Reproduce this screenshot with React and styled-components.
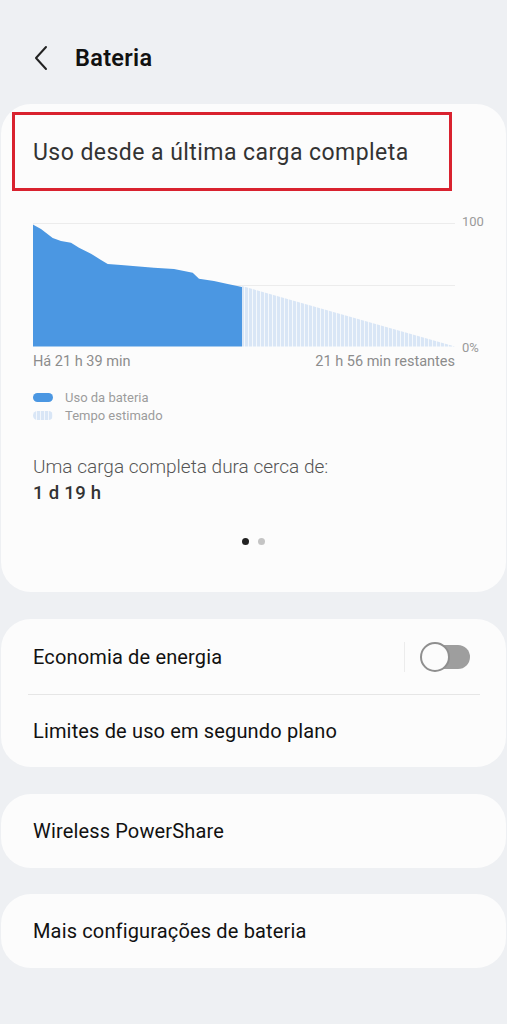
import React from "react";
import styled, { createGlobalStyle } from "styled-components";

const GlobalStyle = createGlobalStyle`
  html, body {
    margin: 0;
    padding: 0;
    background: #eef0f3;
  }
  body {
    font-family: Roboto, "Noto Sans", "Liberation Sans", sans-serif;
    -webkit-font-smoothing: antialiased;
  }
`;

const Page = styled.div`
  width: 507px;
  min-height: 1024px;
  background: #eef0f3;
  display: flex;
  flex-direction: column;
`;

const Header = styled.header`
  height: 104px;
  display: flex;
  align-items: center;
  padding-left: 33px;
  box-sizing: border-box;
  padding-top: 12px;
`;

const BackButton = styled.button`
  border: 0;
  background: none;
  padding: 0;
  width: 18px;
  height: 26px;
  margin-right: 24px;
  display: flex;
  align-items: center;
  cursor: pointer;
`;

const Title = styled.h1`
  margin: 0;
  font-size: 23.5px;
  font-weight: 600;
  color: #111;
  letter-spacing: 0.3px;
`;

const Card = styled.section`
  margin: 0 1px ${(p) => p.gap || 0}px;
  background: #fcfcfc;
  border-radius: 30px;
  display: flex;
  flex-direction: column;
`;

const Highlight = styled.div`
  margin: 8px 0 0 11px;
  width: 440px;
  height: 79px;
  box-sizing: border-box;
  border: 3px solid #d9222f;
  display: flex;
  align-items: center;
  padding-left: 18px;
`;

const CardTitle = styled.h2`
  margin: 0;
  font-size: 23px;
  font-weight: 400;
  color: #333;
  letter-spacing: 0.45px;
  padding-top: 2px;
`;

const ChartRow = styled.div`
  margin: 31px 0 0 32px;
  display: flex;
  height: 126px;
`;

const AxisLabels = styled.div`
  display: flex;
  flex-direction: column;
  justify-content: space-between;
  margin: -7px 0 -7px 7px;
  font-size: 13px;
  line-height: 14px;
  color: #9a9a9a;
`;

const TimeRow = styled.div`
  margin: 6px 0 0 32px;
  width: 422px;
  display: flex;
  justify-content: space-between;
  font-size: 14.5px;
  line-height: 16px;
  color: #8c8c8c;
`;

const Legend = styled.ul`
  list-style: none;
  margin: 18px 0 0 32px;
  padding: 0;
`;

const LegendItem = styled.li`
  display: flex;
  align-items: center;
  height: 18px;
  font-size: 13px;
  color: #9c9c9c;
`;

const Swatch = styled.span`
  width: 20px;
  height: 9px;
  border-radius: 5px;
  margin-right: 12px;
  background: ${(p) =>
    p.striped
      ? "repeating-linear-gradient(90deg, #d9e6f6 0 3px, #f3f7fc 3px 4px)"
      : "#4b97e2"};
`;

const Summary = styled.div`
  margin: 30px 0 0 32px;
  font-size: 19px;
  line-height: 26px;
`;

const SummaryLabel = styled.div`
  color: #555;
  font-weight: 300;
`;

const SummaryValue = styled.div`
  color: #333;
  font-weight: 500;
  font-size: 18.5px;
  letter-spacing: 0.3px;
`;

const Dots = styled.div`
  margin: 32px 0 47px;
  display: flex;
  justify-content: center;
  gap: 9px;
`;

const Dot = styled.span`
  width: 7px;
  height: 7px;
  border-radius: 50%;
  background: ${(p) => (p.active ? "#222" : "#c4c4c4")};
`;

const Row = styled.div`
  height: ${(p) => p.h || 74}px;
  display: flex;
  align-items: center;
  padding: 0 36px 0 32px;
  font-size: 20px;
  letter-spacing: 0.15px;
  color: #111;
`;

const RowLabel = styled.span`
  flex: 1;
`;

const Divider = styled.div`
  height: 1px;
  background: #e6e6e6;
  margin: 0 26px 0 27px;
`;

const VSep = styled.span`
  width: 1px;
  height: 30px;
  background: #ececec;
  margin-right: 15px;
`;

const Switch = styled.span`
  position: relative;
  width: 50px;
  height: 30px;
  display: flex;
  align-items: center;
  justify-content: flex-end;

  &::before {
    content: "";
    width: 40px;
    height: 24px;
    border-radius: 12px;
    background: #9e9e9e;
  }
  &::after {
    content: "";
    position: absolute;
    left: 0;
    top: 0;
    width: 26px;
    height: 26px;
    border-radius: 50%;
    background: #fcfcfc;
    border: 2px solid #8f8f8f;
  }
`;

const usagePoints = [
  [0, 2.5], [0.7, 3], [8, 7], [19.7, 16], [28, 19], [38, 20.7], [46, 25.7],
  [58, 31.7], [68, 38], [74.7, 42], [88, 43], [121, 45.7], [141, 47],
  [151, 49], [159.7, 50.7], [166, 56.7], [181, 59], [194.7, 62], [209, 65],
];

const BatteryChart = () => {
  const line = usagePoints.map(([x, y]) => `${x},${y}`).join(" L");
  return (
    <svg width="422" height="126" viewBox="0 0 422 126">
      <defs>
        <pattern id="est" width="4" height="4" patternUnits="userSpaceOnUse">
          <rect width="4" height="4" fill="#f4f8fc" />
          <rect width="3" height="4" fill="#d9e6f6" />
        </pattern>
      </defs>
      <line x1="0" y1="1.5" x2="422" y2="1.5" stroke="#ececec" strokeWidth="1" />
      <line x1="0" y1="63.5" x2="422" y2="63.5" stroke="#ececec" strokeWidth="1" />
      <path d="M209,64 L422,124.5 L209,124.5 Z" fill="url(#est)" />
      <path d={`M${line} L209,124.5 L0,124.5 Z`} fill="#4b97e2" />
    </svg>
  );
};

export default function App() {
  return (
    <Page>
      <GlobalStyle />
      <Header>
        <BackButton aria-label="Voltar">
          <svg width="16" height="26" viewBox="0 0 16 26">
            <path
              d="M13 2 L3 13 L13 24"
              fill="none"
              stroke="#222"
              strokeWidth="2"
              strokeLinecap="round"
              strokeLinejoin="round"
            />
          </svg>
        </BackButton>
        <Title>Bateria</Title>
      </Header>

      <Card gap={27}>
        <Highlight>
          <CardTitle>Uso desde a última carga completa</CardTitle>
        </Highlight>
        <ChartRow>
          <BatteryChart />
          <AxisLabels>
            <span>100</span>
            <span>0%</span>
          </AxisLabels>
        </ChartRow>
        <TimeRow>
          <span>Há 21 h 39 min</span>
          <span>21 h 56 min restantes</span>
        </TimeRow>
        <Legend>
          <LegendItem>
            <Swatch />
            Uso da bateria
          </LegendItem>
          <LegendItem>
            <Swatch striped />
            Tempo estimado
          </LegendItem>
        </Legend>
        <Summary>
          <SummaryLabel>Uma carga completa dura cerca de:</SummaryLabel>
          <SummaryValue>1 d 19 h</SummaryValue>
        </Summary>
        <Dots>
          <Dot active />
          <Dot />
        </Dots>
      </Card>

      <Card gap={27}>
        <Row h={75}>
          <RowLabel>Economia de energia</RowLabel>
          <VSep />
          <Switch role="switch" aria-checked="false" />
        </Row>
        <Divider />
        <Row h={72}>
          <RowLabel>Limites de uso em segundo plano</RowLabel>
        </Row>
      </Card>

      <Card gap={26}>
        <Row>
          <RowLabel>Wireless PowerShare</RowLabel>
        </Row>
      </Card>

      <Card>
        <Row>
          <RowLabel>Mais configurações de bateria</RowLabel>
        </Row>
      </Card>
    </Page>
  );
}
